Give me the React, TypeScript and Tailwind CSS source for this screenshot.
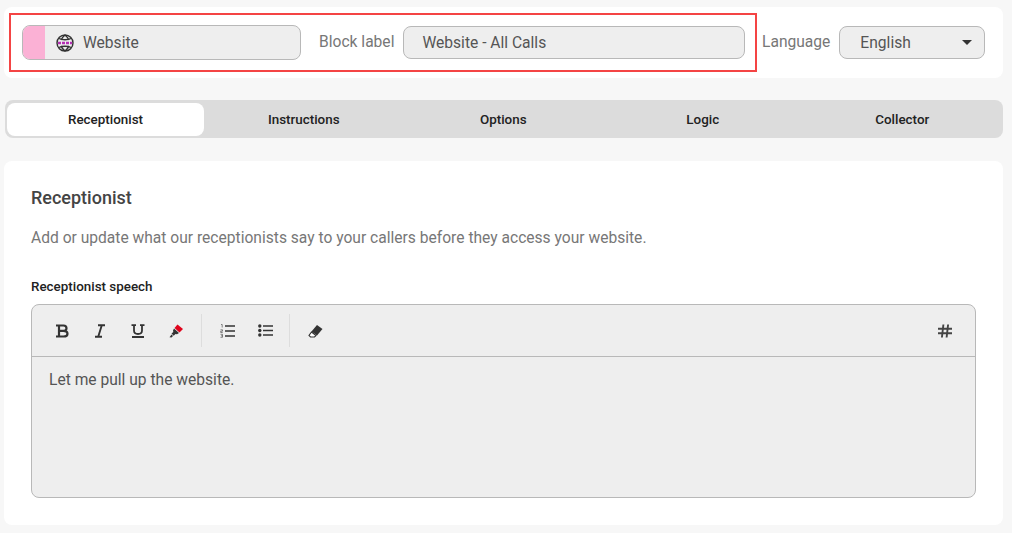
import React from "react";

const Globe = () => (
  <svg width="18" height="18" viewBox="0 0 18 18" fill="none" stroke="#333" strokeWidth="1.4">
    <circle cx="9" cy="9" r="8" />
    <path d="M3 4.500c3 1.600 9 1.600 12 0M3 13.500c3-1.600 9-1.600 12 0" />
    <path d="M9 1c-2.600 2.200-3.600 4-3.800 5M9 1c2.600 2.200 3.600 4 3.800 5M9 17c-2.600-2.200-3.600-4-3.800-5M9 17c2.600-2.200 3.600-4 3.800-5" />
    <path d="M2 9h14" stroke="#b52fb5" strokeWidth="2.400" strokeDasharray="3 1" />
  </svg>
);

const Bold = () => (
  <svg width="13" height="14" viewBox="0 0 13 14" fill="none" stroke="#333" strokeWidth="2.200">
    <path d="M0 1.500h7.500c2 0 3 1.200 3 2.700s-1 2.700-3 2.700H3M7.500 6.900c2.500 0 4 1.300 4 2.800s-1.500 2.800-4 2.800H0M3 1.500v11" />
  </svg>
);

const Italic = () => (
  <svg width="12" height="14" viewBox="0 0 12 14" fill="none" stroke="#333" strokeWidth="1.900">
    <path d="M4 1.300h7M1 12.700h7M7.800 1.300 4.200 12.700" />
  </svg>
);

const Underline = () => (
  <svg width="14" height="14" viewBox="0 0 14 14" fill="none" stroke="#333" strokeWidth="1.800">
    <path d="M.5 1.200h4.500M9 1.200h4.500M3 1.200v5.300c0 2.300 1.600 3.500 4 3.500s4-1.200 4-3.500V1.200M1 13h12" />
  </svg>
);

const Marker = () => (
  <svg width="16" height="16" viewBox="0 0 16 16">
    <path d="M9.500 1.500 15 6l-3.500 3.500L6.500 5z" fill="#e0041c" />
    <path d="M6 5.500 11 10l-2 1.200-1.500-.2L5.700 12.800 3.500 10.600 5.300 9 5 7.500z" fill="#333" />
    <path d="M3.500 11.500 5 13l-1.500 1.500-2-.2z" fill="#333" />
  </svg>
);

const OrderedList = () => (
  <svg width="15" height="14" viewBox="0 0 15 14" fill="none">
    <path d="M5 2h10M5 7h10M5 12h10" stroke="#333" strokeWidth="1.300" />
    <path d="M1 .5h1.200v3M.5 5.800h2v1.400H.700v1.300h2M.5 10.300h2v3h-2M1 11.800h1.500" stroke="#555" strokeWidth=".7" />
  </svg>
);

const BulletList = () => (
  <svg width="15" height="13" viewBox="0 0 15 13" fill="none">
    <circle cx="1.800" cy="2" r="1.700" fill="#333" />
    <circle cx="1.800" cy="6.500" r="1.700" fill="#333" />
    <circle cx="1.800" cy="11" r="1.700" fill="#333" />
    <path d="M5 2h10M5 6.500h10M5 11h10" stroke="#333" strokeWidth="1.500" />
  </svg>
);

const Eraser = () => (
  <svg width="15" height="14" viewBox="0 0 15 14">
    <path d="M9 1 14.500 5 9 11.500 3.500 7.500z" fill="#333" />
    <path d="M3.500 8 8 11.500 6.500 13H2.500L1 11.500z" fill="#fff" stroke="#333" strokeWidth="1.100" />
  </svg>
);

const Hash = () => (
  <svg width="14" height="14" viewBox="0 0 14 14" fill="none" stroke="#444" strokeWidth="1.900">
    <path d="M0 4.800h14M0 9.300h14M5.400 .5 3.900 13.500M10.100 .5 8.600 13.500" />
  </svg>
);

const tabs = ["Receptionist", "Instructions", "Options", "Logic", "Collector"];

const App = () => {
  return (
    <div className="w-[1012px] h-[533px] overflow-hidden bg-[#f7f7f7] pt-[7px] pl-[4px] font-['Roboto',sans-serif] text-[#555]">
      <div className="w-[999px] h-[71px] bg-white rounded-lg flex items-center pl-[5px]">
        <div className="w-[748px] h-[59px] border-2 border-[#f44444] flex items-center pl-[11px]">
          <div className="w-[279px] h-[35px] flex items-center bg-[#eeeeee] border border-[#b8b8b8] rounded-lg overflow-hidden text-[15.6px] text-[#555]">
            <div className="w-[22px] h-full bg-[#fbb1d5] shrink-0"></div>
            <div className="ml-[11px] flex items-center">
              <Globe />
            </div>
            <span className="ml-[9px] pt-[2px]">Website</span>
          </div>
          <span className="ml-[18px] text-[15.6px] text-[#777]">Block label</span>
          <div className="ml-[9px] w-[342px] h-[33px] flex items-center bg-[#eeeeee] border border-[#b8b8b8] rounded-lg pl-[18px] pt-[3px] text-[15.6px] text-[#555]">
            Website - All Calls
          </div>
        </div>
        <span className="ml-[5px] text-[15.6px] text-[#777]">Language</span>
        <div className="ml-[9px] w-[146px] h-[33px] flex items-center justify-between bg-[#eeeeee] border border-[#b8b8b8] rounded-lg pl-[20px] pr-[12px] text-[15.6px] text-[#555]">
          <span className="pt-[3px]">English</span>
          <span className="w-0 h-0 border-x-[5px] border-x-transparent border-t-[5px] border-t-[#333]"></span>
        </div>
      </div>

      <div className="mt-[22px] ml-[1px] w-[998px] h-[38px] bg-[#dcdcdc] rounded-lg py-[3px] pl-[2px] pr-px flex">
        {tabs.map((t, i) => (
          <div
            key={t}
            className={
              i === 0
                ? "w-[197px] shrink-0 h-[33px] pt-[2px] bg-white rounded-lg flex items-center justify-center text-[13.4px] font-medium text-[#222]"
                : "flex-1 h-[33px] pt-[2px] flex items-center justify-center text-[13.4px] font-medium text-[#222]"
            }
          >
            {t}
          </div>
        ))}
      </div>

      <div className="mt-[23px] w-[999px] h-[364px] bg-white rounded-lg pl-[27px] pt-[27px]">
        <h2 className="text-[18px] leading-[20px] font-medium text-[#444]">Receptionist</h2>
        <p className="mt-[20px] text-[15.6px] leading-[20px] text-[#777]">
          Add or update what our receptionists say to your callers before they access your website.
        </p>
        <div className="mt-[30px] text-[13.4px] leading-[18px] font-medium text-[#222]">Receptionist speech</div>
        <div className="mt-[8px] w-[945px] h-[194px] bg-[#eeeeee] border border-[#b8b8b8] rounded-lg">
          <div className="h-[52px] border-b border-[#b8b8b8] flex items-center pl-[24px] pr-[23px]">
            <Bold />
            <div className="ml-[25px]">
              <Italic />
            </div>
            <div className="ml-[25px]">
              <Underline />
            </div>
            <div className="ml-[23px]">
              <Marker />
            </div>
            <div className="ml-[17px] w-px h-[33px] bg-[#dddddd]"></div>
            <div className="ml-[18px]">
              <OrderedList />
            </div>
            <div className="ml-[23px]">
              <BulletList />
            </div>
            <div className="ml-[16px] w-px h-[33px] bg-[#dddddd]"></div>
            <div className="ml-[18px]">
              <Eraser />
            </div>
            <div className="ml-auto">
              <Hash />
            </div>
          </div>
          <div className="pl-[17px] pt-[13px] text-[15.6px] leading-[20px] text-[#555]">Let me pull up the website.</div>
        </div>
      </div>
    </div>
  );
};

export default App;
